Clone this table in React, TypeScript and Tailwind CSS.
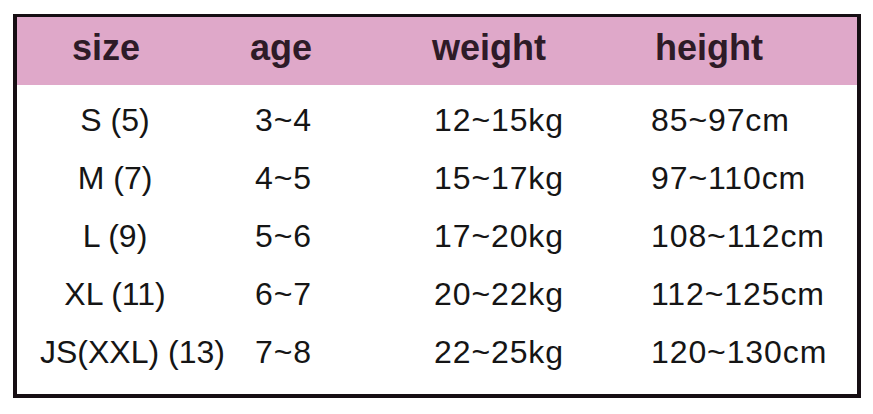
const rows = [
  { size: "S (5)", age: "3~4", weight: "12~15kg", height: "85~97cm", shift: "" },
  { size: "M (7)", age: "4~5", weight: "15~17kg", height: "97~110cm", shift: "" },
  { size: "L (9)", age: "5~6", weight: "17~20kg", height: "108~112cm", shift: "" },
  { size: "XL (11)", age: "6~7", weight: "20~22kg", height: "112~125cm", shift: "" },
  { size: "JS(XXL) (13)", age: "7~8", weight: "22~25kg", height: "120~130cm", shift: "pl-[23px]" },
];

export default function App() {
  return (
    <div
      className="w-[873px] h-[414px] bg-white pl-[13px] pt-[14px]"
      style={{ fontFamily: '"Liberation Sans", Arial, sans-serif' }}
    >
      <div className="w-[848px] h-[384px] border-4 border-t-[3px] border-[#160e13] flex flex-col">
        {/* header */}
        <div className="h-[68px] bg-[#dfa8c9] grid grid-cols-[238px_179px_217px_1fr] items-center pb-[6px] text-[36px] font-bold text-[#2e1b27] leading-none">
          <div className="w-[178px] text-center">size</div>
          <div className="ml-[-5px]">age</div>
          <div className="ml-[-2px]">weight</div>
          <div className="ml-[4px]">height</div>
        </div>

        {/* body */}
        <div className="flex-1 pt-[6px] text-[32px] tracking-[0.9px] text-[#151515] leading-none">
          {rows.map((r) => (
            <div key={r.size} className="h-[58px] grid grid-cols-[238px_179px_217px_1fr] items-center">
              <div className={`w-[196px] text-center whitespace-nowrap tracking-normal ${r.shift}`}>{r.size}</div>
              <div>{r.age}</div>
              <div>{r.weight}</div>
              <div>{r.height}</div>
            </div>
          ))}
        </div>
      </div>
    </div>
  );
}
